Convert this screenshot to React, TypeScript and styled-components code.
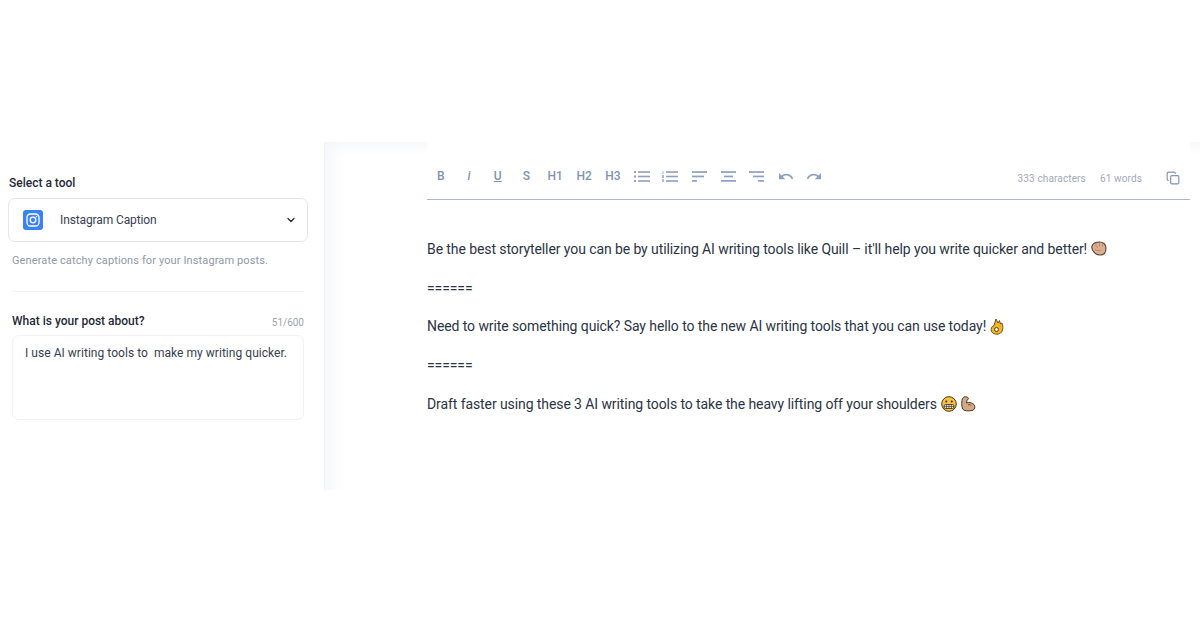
import styled, { createGlobalStyle } from 'styled-components';
import { ChevronDown, Copy } from 'lucide-react';

const GlobalStyle = createGlobalStyle`
  html, body {
    margin: 0;
    background: #fff;
    font-family: Roboto, "Liberation Sans", sans-serif;
  }
  * { box-sizing: border-box; }
`;

const Page = styled.div`
  width: 1200px;
  height: 630px;
  padding-top: 142px;
  overflow: hidden;
`;

const Shell = styled.div`
  display: flex;
  height: 348px;
`;

const Sidebar = styled.aside`
  width: 325px;
  flex: none;
  padding: 33px 0 0 8px;
  border-right: 1px solid #f1f3f7;
`;

const SectionLabel = styled.div<{ $indent?: number }>`
  margin-left: ${(p) => p.$indent ?? 0}px;
  font-size: 12px;
  line-height: 16px;
  font-weight: 500;
  color: #1f2937;
`;

const Select = styled.div`
  display: flex;
  align-items: center;
  width: 300px;
  height: 44px;
  margin-top: 7px;
  padding: 0 10px 0 14px;
  border: 1px solid #e5e7ef;
  border-radius: 7px;
  font-size: 12px;
  letter-spacing: -0.12px;
  color: #374151;
`;

const ToolIcon = styled.span`
  display: flex;
  align-items: center;
  justify-content: center;
  width: 20px;
  height: 20px;
  margin-right: 17px;
  border-radius: 3px;
  background: #3b82f6;
`;

const SelectName = styled.span`
  flex: 1;
`;

const Hint = styled.p`
  margin: 12px 0 0 4px;
  font-size: 11px;
  line-height: 14px;
  letter-spacing: 0.12px;
  color: #8f98a8;
`;

const Divider = styled.hr`
  width: 292px;
  margin: 23px 0 0 4px;
  border: 0;
  border-top: 1px solid #f1f3f6;
`;

const FieldHead = styled.div`
  display: flex;
  align-items: flex-end;
  justify-content: space-between;
  width: 292px;
  margin: 21px 0 0 4px;
`;

const Counter = styled.span`
  margin-bottom: -1px;
  font-size: 10px;
  line-height: 14px;
  color: #9ca3af;
`;

const TextBox = styled.div`
  width: 292px;
  height: 85px;
  margin: 6px 0 0 4px;
  padding: 9px 12px;
  border: 1px solid #eff1f5;
  border-radius: 7px;
  font-size: 12px;
  line-height: 16px;
  letter-spacing: 0.04px;
  white-space: pre;
  color: #374151;
`;

const Main = styled.main`
  flex: 1;
  padding: 0 10px 0 102px;
  box-shadow: inset 20px 16px 16px -12px #f6f7fb;
`;

const Editor = styled.section`
  height: 100%;
  padding-top: 18px;
  background: #fff;
`;

const Toolbar = styled.div`
  display: flex;
  align-items: center;
  height: 40px;
  padding: 0 10px 7px 0;
  border-bottom: 1px solid #a9b6cf;
`;

const ToolButton = styled.span<{ $width?: number; $italic?: boolean; $underline?: boolean }>`
  display: flex;
  align-items: center;
  justify-content: center;
  width: ${(p) => p.$width ?? 28.8}px;
  height: 20px;
  font-size: 12px;
  font-weight: 500;
  color: #8093b3;
  font-style: ${(p) => (p.$italic ? 'italic' : 'normal')};
  text-decoration: ${(p) => (p.$underline ? 'underline' : 'none')};
`;

const Stats = styled.span`
  display: flex;
  align-items: center;
  gap: 14px;
  margin-left: auto;
  padding-top: 5px;
  font-size: 10px;
  letter-spacing: 0.13px;
  color: #a2a9b8;
`;

const CopyButton = styled.span`
  display: flex;
  margin-left: 24px;
  padding-top: 3px;
  color: #8093b3;
`;

const Content = styled.div`
  padding-top: 29.5px;
  font-size: 14px;
  letter-spacing: -0.09px;
  color: #2b3445;
`;

const Line = styled.div`
  display: flex;
  align-items: center;
  height: 38.75px;
  white-space: pre;
`;

const Emoji = styled.svg<{ $gap?: number }>`
  flex: none;
  margin-left: ${(p) => p.$gap ?? 4}px;
`;

const BulletListIcon = () => (
  <svg width="16" height="11" viewBox="0 0 16 11" fill="#8ea0bd">
    <rect x="0" y="0" width="2" height="2" />
    <rect x="0" y="4.500" width="2" height="2" />
    <rect x="0" y="9" width="2" height="2" />
    <rect x="4" y="0.200" width="12" height="1.600" />
    <rect x="4" y="4.700" width="12" height="1.600" />
    <rect x="4" y="9.200" width="12" height="1.600" />
  </svg>
);

const NumberListIcon = () => (
  <svg width="16" height="11" viewBox="0 0 16 11" fill="#8ea0bd">
    <rect x="0.500" y="0" width="1" height="3" opacity="0.7" />
    <rect x="0" y="4" width="2" height="3" opacity="0.7" />
    <rect x="0" y="8" width="2" height="3" opacity="0.7" />
    <rect x="4" y="0.200" width="12" height="1.600" />
    <rect x="4" y="4.700" width="12" height="1.600" />
    <rect x="4" y="9.200" width="12" height="1.600" />
  </svg>
);

const alignRows = {
  left: [[0, 15], [0, 12], [0, 5]],
  center: [[0, 15], [3, 9], [0, 15]],
  right: [[0, 15], [4, 11], [9, 6]],
};

const AlignIcon = ({ mode }: { mode: 'left' | 'center' | 'right' }) => (
  <svg width="15" height="11" viewBox="0 0 15 11" fill="#8ea0bd">
    {alignRows[mode].map(([x, w], i) => (
      <rect key={i} x={x} y={i * 4.400 + 0.200} width={w} height="1.700" />
    ))}
  </svg>
);

const UndoIcon = ({ flip }: { flip?: boolean }) => (
  <svg width="14" height="7" viewBox="2 7 20 10" fill="#8ea0bd" transform={flip ? 'scale(-1 1)' : undefined}>
    <path d="M12.500 8c-2.650 0-5.050.990-6.900 2.600L2 7v9h9l-3.620-3.620c1.390-1.160 3.160-1.880 5.120-1.880 3.540 0 6.550 2.310 7.600 5.500l2.370-.780C21.080 11.030 17.150 8 12.500 8z" />
  </svg>
);

const FistEmoji = () => (
  <Emoji width="16" height="15" viewBox="0 0 16 15">
    <path d="M1 5 C2 2 5 1 8.500 1 C12 1 15 3 15 7 C15 11 13 14 9.500 14 C6 14 4 12.500 3 11 C1.500 9.500 0.500 7 1 5Z" fill="#dcae90" stroke="#5a4136" strokeWidth="1.100" />
    <path d="M5 2 C4.500 4 5 6 7 6.500 M8.500 2 L8.500 5.500 M11.500 2.500 L11.500 5.500 M4 8.500 C6 10 8 10 10 9" fill="none" stroke="#a5806a" strokeWidth="0.700" />
  </Emoji>
);

const OkEmoji = () => (
  <Emoji width="14" height="17" viewBox="0 0 14 17">
    <path d="M6 1 L8 5 L9.500 2.500 L10.500 6 L12 5 C13.500 9 13 13 10.500 15 C8 17 3 16.500 1.500 13.500 C0.500 11 1.500 8.500 4 7.500Z" fill="#f0b429" stroke="#5c4310" strokeWidth="0.900" />
    <circle cx="6.500" cy="11.500" r="2" fill="#fff3cf" stroke="#5c4310" strokeWidth="1" />
  </Emoji>
);

const GrimaceEmoji = () => (
  <Emoji width="16" height="16" viewBox="0 0 16 16">
    <circle cx="8" cy="8" r="7.300" fill="#f6c243" stroke="#4a3a12" strokeWidth="1" />
    <circle cx="5.300" cy="5.500" r="1" fill="#3a2d10" />
    <circle cx="10.700" cy="5.500" r="1" fill="#3a2d10" />
    <rect x="3" y="8.500" width="10" height="4" rx="1.500" fill="#e0e0e0" stroke="#3a2d10" strokeWidth="0.800" />
    <path d="M3 10.500 H13 M5.500 8.500 V12.500 M8 8.500 V12.500 M10.500 8.500 V12.500" stroke="#3a2d10" strokeWidth="0.600" />
  </Emoji>
);

const ArmEmoji = () => (
  <Emoji $gap={3} width="16" height="16" viewBox="0 0 16 16">
    <path d="M4 1 C6 0.500 8 1 8.500 2.500 L7 4.500 L6.500 7 C8.500 6 12 6.500 14 8.500 C15.500 10.500 15 14 12 14.500 C8.500 15.300 4 15 2.500 13 C1.500 9 1.500 5 2.500 2.500 C3 1.800 3.500 1.200 4 1Z" fill="#d3a883" stroke="#4a3528" strokeWidth="1" />
    <path d="M8 9 C9 8.200 10.500 8.500 11 9.500" fill="none" stroke="#4a3528" strokeWidth="0.800" />
  </Emoji>
);

export default function App() {
  return (
    <>
      <GlobalStyle />
      <Page>
        <Shell>
          <Sidebar>
            <SectionLabel $indent={1}>Select a tool</SectionLabel>
            <Select>
              <ToolIcon>
                <svg width="14" height="14" viewBox="0 0 14 14" fill="none" stroke="#fff" strokeWidth="1.300">
                  <rect x="1" y="1" width="12" height="12" rx="3.500" />
                  <circle cx="7" cy="7" r="2.800" />
                  <circle cx="10.500" cy="3.500" r="0.500" fill="#fff" strokeWidth="0.500" />
                </svg>
              </ToolIcon>
              <SelectName>Instagram Caption</SelectName>
              <ChevronDown size={12} strokeWidth={2.600} color="#1f2937" />
            </Select>
            <Hint>Generate catchy captions for your Instagram posts.</Hint>
            <Divider />
            <FieldHead>
              <SectionLabel>What is your post about?</SectionLabel>
              <Counter>51/600</Counter>
            </FieldHead>
            <TextBox>I use AI writing tools to  make my writing quicker.</TextBox>
          </Sidebar>
          <Main>
            <Editor>
              <Toolbar>
                <ToolButton $width={27.5}>B</ToolButton>
                <ToolButton $italic>i</ToolButton>
                <ToolButton $underline>U</ToolButton>
                <ToolButton>S</ToolButton>
                <ToolButton>H1</ToolButton>
                <ToolButton>H2</ToolButton>
                <ToolButton>H3</ToolButton>
                <ToolButton><BulletListIcon /></ToolButton>
                <ToolButton><NumberListIcon /></ToolButton>
                <ToolButton><AlignIcon mode="left" /></ToolButton>
                <ToolButton><AlignIcon mode="center" /></ToolButton>
                <ToolButton><AlignIcon mode="right" /></ToolButton>
                <ToolButton><UndoIcon /></ToolButton>
                <ToolButton><UndoIcon flip /></ToolButton>
                <Stats>
                  <span>333 characters</span>
                  <span>61 words</span>
                </Stats>
                <CopyButton><Copy size={14} /></CopyButton>
              </Toolbar>
              <Content>
                <Line>Be the best storyteller you can be by utilizing AI writing tools like Quill – it'll help you write quicker and better!<FistEmoji /></Line>
                <Line>======</Line>
                <Line>Need to write something quick? Say hello to the new AI writing tools that you can use today!<OkEmoji /></Line>
                <Line>======</Line>
                <Line>Draft faster using these 3 AI writing tools to take the heavy lifting off your shoulders<GrimaceEmoji /><ArmEmoji /></Line>
              </Content>
            </Editor>
          </Main>
        </Shell>
      </Page>
    </>
  );
}
